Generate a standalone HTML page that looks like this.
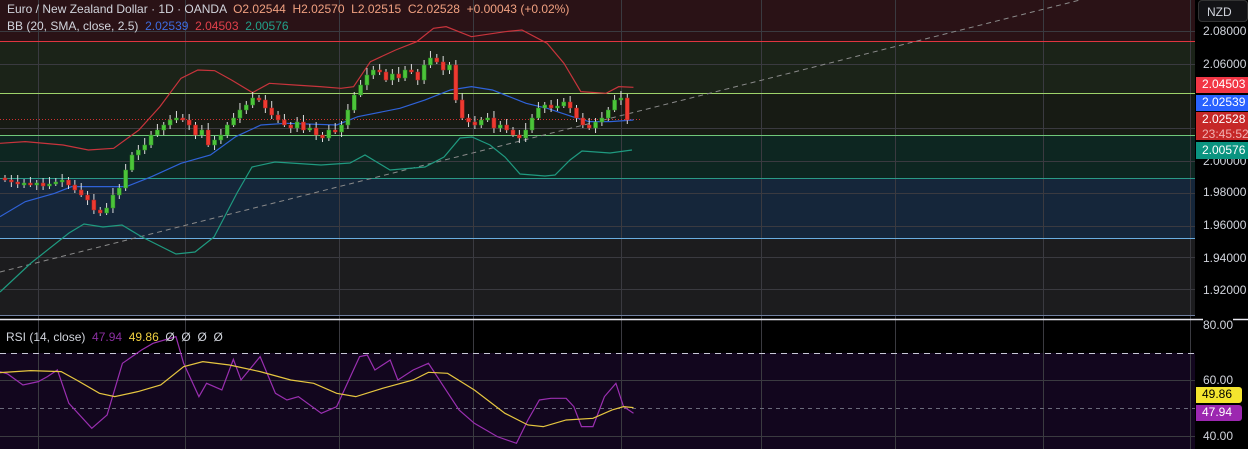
<!DOCTYPE html>
<html><head><meta charset="utf-8"><style>
html,body{margin:0;padding:0;background:#000;overflow:hidden}
body{width:1248px;height:449px;position:relative;font-family:"Liberation Sans",sans-serif}
.t{position:absolute;font-size:12px;white-space:nowrap}
.ax{position:absolute;left:1203px;font-size:12px;color:#d1d4dc}
.tag{position:absolute;left:1196px;width:52px;font-size:12px;color:#fff;padding-left:6px;box-sizing:border-box;line-height:15px}
</style></head><body>
<svg width="1248" height="449" style="position:absolute;left:0;top:0">
<rect x="0" y="0" width="1195" height="41" fill="#2a1216"/>
<rect x="0" y="41" width="1195" height="52" fill="#1b2318"/>
<rect x="0" y="93" width="1195" height="42" fill="#171b14"/>
<rect x="0" y="135" width="1195" height="43" fill="#0d2621"/>
<rect x="0" y="178" width="1195" height="60" fill="#15263a"/>
<rect x="0" y="238" width="1195" height="78" fill="#1c1c1e"/>
<rect x="0" y="320" width="1195" height="33" fill="#000"/>
<rect x="0" y="353" width="1195" height="96" fill="#12061e"/>
<g stroke="#3a3a40" stroke-width="1">
<line x1="38.5" y1="0" x2="38.5" y2="449"/><line x1="185.5" y1="0" x2="185.5" y2="449"/><line x1="339.5" y1="0" x2="339.5" y2="449"/><line x1="473.5" y1="0" x2="473.5" y2="449"/><line x1="621.5" y1="0" x2="621.5" y2="449"/><line x1="761.5" y1="0" x2="761.5" y2="449"/><line x1="895.5" y1="0" x2="895.5" y2="449"/><line x1="1043.5" y1="0" x2="1043.5" y2="449"/><line x1="1190.5" y1="0" x2="1190.5" y2="449"/>
<line x1="0" y1="31.5" x2="1195" y2="31.5"/><line x1="0" y1="64.5" x2="1195" y2="64.5"/><line x1="0" y1="128.5" x2="1195" y2="128.5"/><line x1="0" y1="161.5" x2="1195" y2="161.5"/><line x1="0" y1="193.5" x2="1195" y2="193.5"/><line x1="0" y1="226.5" x2="1195" y2="226.5"/><line x1="0" y1="257.5" x2="1195" y2="257.5"/><line x1="0" y1="289.5" x2="1195" y2="289.5"/>
<line x1="0" y1="380.5" x2="1195" y2="380.5"/><line x1="0" y1="436.5" x2="1195" y2="436.5"/>
</g>
<line x1="0" y1="41.5" x2="1195" y2="41.5" stroke="#e0353f"/>
<line x1="0" y1="93.5" x2="1195" y2="93.5" stroke="#9ed36a"/>
<line x1="0" y1="135.5" x2="1195" y2="135.5" stroke="#6fc87a"/>
<line x1="0" y1="178.5" x2="1195" y2="178.5" stroke="#2a9a88"/>
<line x1="0" y1="238.5" x2="1195" y2="238.5" stroke="#6aaee0"/>
<line x1="0" y1="315.5" x2="1195" y2="315.5" stroke="#7080a0"/>
<line x1="0" y1="319.5" x2="1248" y2="319.5" stroke="#e8e8f0" stroke-width="1.5"/>
<line x1="0" y1="353.5" x2="1195" y2="353.5" stroke="#c8c8d8" stroke-dasharray="6,5"/>
<line x1="0" y1="408.5" x2="1195" y2="408.5" stroke="#6a6a7a" stroke-dasharray="4,4"/>
<line x1="0" y1="272" x2="1080" y2="0" stroke="#8a8a8a" stroke-dasharray="5,4"/>
<line x1="0" y1="119.5" x2="640" y2="119.5" stroke="#d03030" stroke-dasharray="1,2"/>
<g transform="translate(0,20) scale(0.4209,0.3333)" fill="none" stroke-width="1.2">
<polyline vector-effect="non-scaling-stroke" stroke="#c8343c" points="0,370 60,365 150,375 210,390 270,385 330,330 380,260 430,175 470,150 510,152 550,180 600,218 640,190 700,195 760,200 810,205 840,200 880,125 940,90 990,65 1030,25 1060,20 1120,50 1200,35 1240,30 1300,70 1340,130 1380,215 1440,220 1470,200 1505,202"/>
<polyline vector-effect="non-scaling-stroke" stroke="#2f62d8" points="0,590 60,545 130,520 170,500 240,500 300,500 360,470 430,430 500,405 560,350 620,315 680,310 800,315 850,290 950,265 1010,240 1070,210 1120,200 1170,210 1250,250 1300,265 1360,290 1400,305 1450,305 1505,300"/>
</g>
<polyline fill="none" stroke="#1f9a80" stroke-width="1.2" points="0,292 31,263 69,233 84,224 103,227 122,225 142,237 176,254 195,252 214,237 237,193 252,167 275,162 321,165 350,163 365,155 390,170 425,167 444,157 460,138 472,137 490,145 505,157 520,174 545,176 555,175 570,160 582,151 610,153 632,150"/>
<g id="candles"></g>
<g transform="translate(0,150) scale(0.7651,0.3333)" fill="none" stroke-width="1.2">
<polyline vector-effect="non-scaling-stroke" stroke="#9a2fb0" points="0,665 10,672 30,705 50,695 62,680 75,660 90,760 120,835 140,795 160,640 185,600 200,580 230,560 240,640 260,740 270,700 290,720 305,628 315,690 340,620 360,730 375,750 390,740 420,790 440,770 460,670 470,620 480,615 490,660 510,630 520,690 540,660 560,640 580,710 600,780 620,820 650,860 675,880 690,810 705,750 720,745 740,745 750,770 760,830 775,830 790,740 805,700 815,770 828,790"/>
<polyline vector-effect="non-scaling-stroke" stroke="#e6c640" points="0,668 40,662 80,665 100,690 130,730 150,740 180,725 210,705 240,650 265,635 300,645 340,665 380,690 410,700 440,730 465,740 500,715 540,690 560,667 585,670 620,720 660,790 690,825 710,830 740,810 775,805 800,780 815,770 828,773"/>
</g>
<rect x="1195" y="0" width="53" height="449" fill="#000"/>
<line x1="1195" y1="319.5" x2="1248" y2="319.5" stroke="#e8e8f0" stroke-width="1.5"/>
</svg>
<div class="t" style="left:7px;top:2px;color:#d1d4dc">Euro / New Zealand Dollar · 1D · OANDA &nbsp;<span style="color:#f0a080">O2.02544 &nbsp;H2.02570 &nbsp;L2.02515 &nbsp;C2.02528 &nbsp;+0.00043 (+0.02%)</span></div>
<div class="t" style="left:7px;top:19px;color:#d1d4dc">BB (20, SMA, close, 2.5) &nbsp;<span style="color:#3d6ce0">2.02539</span> &nbsp;<span style="color:#e0404a">2.04503</span> &nbsp;<span style="color:#22a08a">2.00576</span></div>
<div class="t" style="left:6px;top:330px;color:#d1d4dc">RSI (14, close) &nbsp;<span style="color:#8a2fa0">47.94</span> &nbsp;<span style="color:#f0d040">49.86</span> &nbsp;Ø &nbsp;Ø &nbsp;Ø &nbsp;Ø</div>
<div style="position:absolute;left:1198px;top:0;width:50px;height:22px;background:#131316;border:1px solid #333;border-radius:4px;color:#d1d4dc;font-size:12px;line-height:22px;padding-left:8px;box-sizing:border-box">NZD</div>
<div class="ax" style="top:24px">2.08000</div>
<div class="ax" style="top:57px">2.06000</div>
<div class="ax" style="top:154px">2.00000</div>
<div class="ax" style="top:185px">1.98000</div>
<div class="ax" style="top:218px">1.96000</div>
<div class="ax" style="top:251px">1.94000</div>
<div class="ax" style="top:283px">1.92000</div>
<div class="ax" style="top:318px;background:#000">80.00</div>
<div class="ax" style="top:373px">60.00</div>
<div class="ax" style="top:429px">40.00</div>
<div class="tag" style="top:77px;height:16px;background:#f23645">2.04503</div>
<div class="tag" style="top:95px;height:16px;background:#2962ff">2.02539</div>
<div class="tag" style="top:112px;height:28px;background:#c62828">2.02528<br><span style="color:#f0b0b0">23:45:52</span></div>
<div class="tag" style="top:142px;height:17px;background:#0a9480;line-height:17px">2.00576</div>
<div class="tag" style="top:387px;height:16px;background:#f5e52e;color:#000;border-radius:0 3px 3px 0;width:46px">49.86</div>
<div class="tag" style="top:405px;height:16px;background:#9c27b0;width:46px;border-radius:0 3px 3px 0">47.94</div>
<script>
(function(){
var c=[180,182,184,183,185,183,186,184,182,180,185,190,195,200,210,213,208,195,188,170,155,150,145,135,130,125,120,118,120,125,135,130,145,140,135,125,118,110,105,98,100,108,115,120,125,128,122,130,128,135,138,130,132,125,110,95,85,75,70,72,80,74,78,70,72,80,65,58,62,70,65,100,118,122,125,120,118,128,125,130,135,138,130,118,108,105,108,106,102,108,118,125,128,122,118,110,100,98,120];
var g=document.getElementById('candles'),s='',o=178;
for(var i=0;i<c.length;i++){var x=3+i*6.35,cl=c[i],up=cl<o,tp=Math.min(o,cl),h=Math.max(2,Math.abs(o-cl)),col=up?'#4cc43a':'#ee3a30';
var w1=tp-3-(i*7%5),w2=tp+h+2+(i*3%4);
s+='<line x1="'+(x+2)+'" y1="'+w1+'" x2="'+(x+2)+'" y2="'+w2+'" stroke="#ddd" stroke-width="1"/>';
s+='<rect x="'+x+'" y="'+tp+'" width="4" height="'+h+'" fill="'+col+'" stroke="'+(up?'#2a8a20':'#a02020')+'" stroke-width="0.5"/>';o=cl;}
g.innerHTML=s;
})();
</script>
</body></html>
